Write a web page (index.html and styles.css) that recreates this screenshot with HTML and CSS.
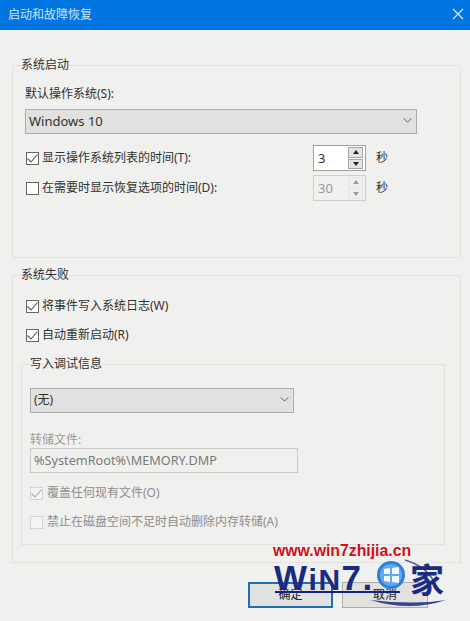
FILE: index.html
```html
<!DOCTYPE html>
<html lang="zh-CN">
<head>
<meta charset="utf-8">
<title>启动和故障恢复</title>
<link rel="stylesheet" href="styles.css">
</head>
<body>
<header class="titlebar">
  <span class="title">启动和故障恢复</span>
  <svg class="close" width="12" height="12" viewBox="0 0 12 12"><path d="M1 1 L11 11 M11 1 L1 11"/></svg>
</header>
<main class="content">
  <fieldset class="group group-start">
    <legend>系统启动</legend>
    <div class="label first">默认操作系统(S):</div>
    <div class="select wide"><span>Windows 10</span><svg class="chev" width="9" height="5" viewBox="0 0 10 6"><path d="M0.5 0.5 L5 5 L9.5 0.5"/></svg></div>
    <div class="timerow t1">
      <label class="check"><span class="box"><svg width="11" height="9" viewBox="0 0 11 9"><path d="M0.5 4.5 L4 8 L10.5 0.5"/></svg></span>显示操作系统列表的时间(T):</label>
      <div class="spin"><span class="val">3</span><span class="arrows"><i class="up"></i><i class="down"></i></span></div>
      <span class="unit">秒</span>
    </div>
    <div class="timerow t2">
      <label class="check"><span class="box"></span>在需要时显示恢复选项的时间(D):</label>
      <div class="spin off"><span class="val">30</span><span class="arrows"><i class="up"></i><i class="down"></i></span></div>
      <span class="unit">秒</span>
    </div>
  </fieldset>
  <fieldset class="group group-fail">
    <legend>系统失败</legend>
    <label class="check c1"><span class="box"><svg width="11" height="9" viewBox="0 0 11 9"><path d="M0.5 4.5 L4 8 L10.5 0.5"/></svg></span>将事件写入系统日志(W)</label>
    <label class="check c2"><span class="box"><svg width="11" height="9" viewBox="0 0 11 9"><path d="M0.5 4.5 L4 8 L10.5 0.5"/></svg></span>自动重新启动(R)</label>
    <fieldset class="group group-debug">
      <legend>写入调试信息</legend>
      <div class="select narrow"><span>(无)</span><svg class="chev" width="9" height="5" viewBox="0 0 10 6"><path d="M0.5 0.5 L5 5 L9.5 0.5"/></svg></div>
      <div class="label dim dump">转储文件:</div>
      <div class="path">%SystemRoot%\MEMORY.DMP</div>
      <label class="check off c3"><span class="box"><svg width="11" height="9" viewBox="0 0 11 9"><path d="M0.5 4.5 L4 8 L10.5 0.5"/></svg></span>覆盖任何现有文件(O)</label>
      <label class="check off c4"><span class="box"></span>禁止在磁盘空间不足时自动删除内存转储(A)</label>
    </fieldset>
  </fieldset>
  <div class="actions">
    <button class="btn primary">确定</button>
    <button class="btn">取消</button>
  </div>
</main>
<aside class="mark">
  <div class="url">www.win7zhijia.cn</div>
  <div class="brand">W<span class="small">iN</span>7.</div>
  <svg class="art" width="190" height="50" viewBox="0 0 190 50">
    <path class="rule" d="M10 28 H135"/>
    <path class="swoosh" d="M105 36 Q145 48 181 36 Q150 41 105 36Z"/>
    <path class="arc" d="M140 -4 Q160 2 168 16"/>
    <circle class="orb" cx="126" cy="11" r="14"/>
    <circle class="orbin" cx="126" cy="11" r="11"/>
    <path class="flag" d="M119 5 L125 4 V10 H119Z M127 4 L134 3 V10 H127Z M119 12 H125 V18 L119 17Z M127 12 H134 V19 L127 18Z"/>
  </svg>
  <div class="jia">家</div>
</aside>
</body>
</html>
```
FILE: styles.css
```css
* { box-sizing: border-box; }
html, body { margin: 0; height: 621px; overflow: hidden; }
body {
  position: relative;
  width: 470px;
  background: #f0f0ee;
  color: #303030;
  font: 13px/18px "Noto Sans", "Noto Sans CJK SC", sans-serif;
}
.titlebar {
  height: 30px;
  background: #0074e1;
  color: #cfe4f8;
  display: flex;
  align-items: center;
  justify-content: space-between;
  padding: 0 6px 0 8px;
}
.title { font-size: 12px; }
.close { fill: none; stroke: #dcefff; stroke-width: 1.1; margin-bottom: 2px; }
.content { padding: 27px 9px 0 12px; }
.group {
  margin: 0;
  padding: 0 0 0 12px;
  border: 1px solid #e2e2df;
  min-width: 0;
}
.group legend {
  margin-left: -4px;
  padding: 0;
  font-size: 12px;
  line-height: 16px;
}
.group-start { height: 201px; }
.group-fail { margin-top: 9px; height: 296px; }
.group-debug {
  margin: 12px 15px 0 -4px;
  height: 189px;
  padding-left: 8px;
}
.group-debug legend { margin-left: 0; }
.label { font-size: 12px; line-height: 18px; }
.first { margin-top: 12px; }
.select {
  margin-top: 6px;
  height: 25px;
  background: #e1e1df;
  border: 1px solid #adadab;
  display: flex;
  align-items: center;
  justify-content: space-between;
  padding: 0 4px 2px 3px;
}
.wide { width: 392px; }
.narrow { width: 264px; margin-top: 16px; font-size: 12px; }
.chev { fill: none; stroke: #555; stroke-width: 1.1; }
.timerow { display: flex; align-items: center; }
.t1 { margin-top: 11px; }
.t2 { margin-top: 4px; }
.timerow .check { width: 288px; }
.check {
  display: flex;
  align-items: center;
  font-size: 12px;
  line-height: 18px;
}
.box {
  width: 13px;
  height: 13px;
  margin: 0 3px 0 1px;
  background: #fff;
  border: 1px solid #666;
  display: flex;
  align-items: center;
  justify-content: center;
}
.box svg { fill: none; stroke: #555; stroke-width: 1.1; }
.spin {
  width: 53px;
  height: 26px;
  background: #fff;
  border: 1px solid #a0a09e;
  display: flex;
  align-items: center;
  justify-content: space-between;
  padding: 1px 1px 1px 4px;
}
.spin .val { font-size: 13px; }
.arrows {
  width: 15px;
  height: 22px;
  display: flex;
  flex-direction: column;
  gap: 1px;
  margin-right: 1px;
}
.arrows i {
  flex: 1;
  background: #e4e4e2;
  border: 1px solid #a5a5a3;
  display: flex;
  align-items: center;
  justify-content: center;
}
.arrows i::before {
  content: "";
  border-left: 3px solid transparent;
  border-right: 3px solid transparent;
}
.up::before { border-bottom: 4px solid #222; }
.down::before { border-top: 4px solid #222; }
.unit { margin-left: 10px; font-size: 12px; }
.spin.off { background: #f0f0ee; border-color: #cfcfcd; color: #9a9a98; }
.off .arrows i { background: #f0f0ee; border-color: #e4e4e2; }
.off .up::before { border-bottom-color: #999; }
.off .down::before { border-top-color: #999; }
.c1 { margin-top: 14px; }
.c2 { margin-top: 11px; }
.dim { color: #9c9c9a; }
.dump { margin-top: 18px; line-height: 17px; }
.path {
  width: 268px;
  height: 25px;
  background: #f0f0ee;
  border: 1px solid #c9c9c7;
  color: #7a7a78;
  font-size: 12.7px;
  padding: 2px 0 0 3px;
}
.check.off { color: #8e8e8c; }
.check.off .box { background: #f4f4f2; border-color: #d4d4d2; margin-left: 0; margin-right: 4px; }
.check.off .box svg { stroke: #aaa; }
.c3 { margin-top: 11px; }
.c4 { margin-top: 11px; }
.actions {
  display: flex;
  justify-content: flex-end;
  gap: 9px;
  margin-top: 19px;
  padding-right: 33px;
}
.btn {
  width: 86px;
  height: 26px;
  padding: 0 0 2px;
  background: #e1e1df;
  border: 1px solid #adadab;
  color: #222;
  font: 12px/18px "Noto Sans CJK SC", sans-serif;
}
.btn.primary { border: 2px solid #1f6fb0; width: 85px; }
.mark {
  position: absolute;
  left: 265px;
  top: 540px;
  width: 190px;
  height: 75px;
}
.url {
  position: absolute;
  left: 8px;
  top: 1px;
  color: #d0101c;
  font: bold 15.8px/20px "Liberation Sans", sans-serif;
  white-space: nowrap;
}
.brand {
  position: absolute;
  left: 9px;
  top: 20px;
  color: #1a2a85;
  font: bold 35px/36px "Liberation Sans", sans-serif;
  letter-spacing: 1.5px;
  white-space: nowrap;
}
.small { font-size: 30px; }
.art { position: absolute; left: 0; top: 24px; overflow: visible; }
.rule { stroke: #14237f; stroke-width: 2; fill: none; }
.swoosh { fill: #3b4390; }
.arc { stroke: #555d9a; stroke-width: 1.5; fill: none; }
.orb { fill: #2f80dc; }
.orbin { fill: #63aaec; }
.flag { fill: #f4f9fe; }
.jia {
  position: absolute;
  left: 145px;
  top: 20px;
  color: #1a2a85;
  font: bold 34px/38px "Noto Sans CJK SC", sans-serif;
}
```
